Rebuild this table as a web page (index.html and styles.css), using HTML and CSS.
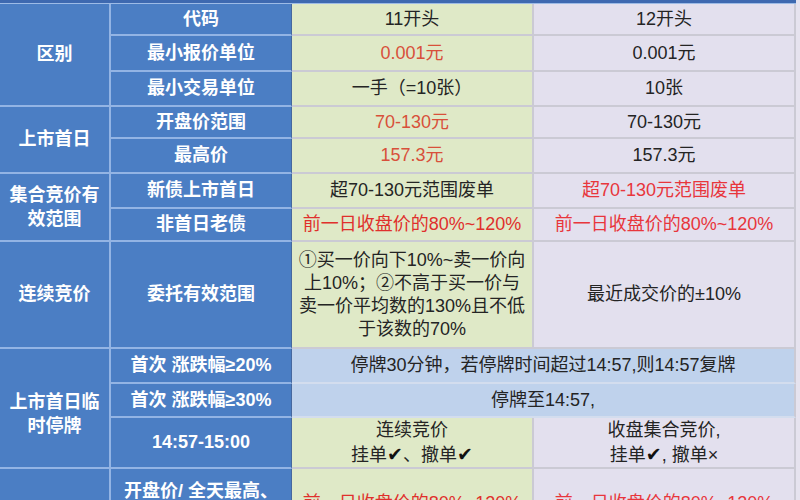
FILE: index.html
```html
<!DOCTYPE html>
<html lang="zh-CN">
<head>
<meta charset="utf-8">
<title>11开头与12开头可转债交易规则对比</title>
<link rel="stylesheet" href="styles.css">
</head>
<body>
<div class="sheet">
  <div class="head"></div>

  <div class="c b k r-1-4">区别</div>
  <div class="c b s">代码</div>
  <div class="c g">11开头</div>
  <div class="c v">12开头</div>

  <div class="c b s">最小报价单位</div>
  <div class="c g red3">0.001元</div>
  <div class="c v">0.001元</div>

  <div class="c b s">最小交易单位</div>
  <div class="c g">一手（=10张）</div>
  <div class="c v">10张</div>

  <div class="c b k r-2">上市首日</div>
  <div class="c b s">开盘价范围</div>
  <div class="c g red3">70-130元</div>
  <div class="c v">70-130元</div>

  <div class="c b s">最高价</div>
  <div class="c g red3">157.3元</div>
  <div class="c v">157.3元</div>

  <div class="c b k r-2 two"><span class="t">集合竞价有<br>效范围</span></div>
  <div class="c b s">新债上市首日</div>
  <div class="c g">超70-130元范围废单</div>
  <div class="c v red4">超70-130元范围废单</div>

  <div class="c b s">非首日老债</div>
  <div class="c g red">前一日收盘价的80%~120%</div>
  <div class="c v red4">前一日收盘价的80%~120%</div>

  <div class="c b k">连续竞价</div>
  <div class="c b s">委托有效范围</div>
  <div class="c g multi"><span class="t">①买一价向下10%~卖一价向上10%；②不高于买一价与卖一价平均数的130%且不低于该数的70%</span></div>
  <div class="c v">最近成交价的±10%</div>

  <div class="c b k r-3 two low"><span class="t">上市首日临<br>时停牌</span></div>
  <div class="c b s">首次 涨跌幅≥20%</div>
  <div class="c w span2">停牌30分钟，若停牌时间超过14:57,则14:57复牌</div>

  <div class="c b s">首次 涨跌幅≥30%</div>
  <div class="c w span2">停牌至14:57,</div>

  <div class="c b s">14:57-15:00</div>
  <div class="c g two"><span class="t">连续竞价<br>挂单<span class="mk">✔</span>、撤单<span class="mk">✔</span></span></div>
  <div class="c v two"><span class="t">收盘集合竞价,<br>挂单<span class="mk">✔</span>, 撤单×</span></div>

  <div class="c b k"></div>
  <div class="c b s two"><span class="t">开盘价/ 全天最高、<br>最低价</span></div>
  <div class="c g red">前一日收盘价的80%~120%</div>
  <div class="c v red4">前一日收盘价的80%~120%</div>
</div>
</body>
</html>
```

FILE: styles.css
```css
html, body {
  margin: 0;
  padding: 0;
  width: 800px;
  height: 500px;
  overflow: hidden;
  background: #e6e3ef;
}

.sheet {
  display: grid;
  width: 796px;
  grid-template-columns: 111px 181px 242px 262px;
  grid-template-rows: 4px 32px 36px 35px 32px 35px 35px 33px 107px 35px 34px 51px 70px;
  font-family: "Liberation Sans", "Noto Sans CJK SC", sans-serif;
  font-size: 18px;
  color: #242424;
}

.head {
  grid-column: 1 / 5;
  background: #3e69b0;
  border-bottom: 1px solid #9dbbe6;
}

.c {
  display: flex;
  align-items: center;
  justify-content: center;
  text-align: center;
  box-sizing: border-box;
  border-bottom: 2px solid #cbcad4;
  border-right: 2px solid #cbcad4;
  line-height: 23px;
}

.t {
  display: block;
}

.b {
  background: #4b7ec4;
  color: #fff;
  font-weight: bold;
  border-bottom-color: #93b4e4;
  border-right-color: #93b4e4;
}

.k { grid-column: 1; }
.s {
  grid-column: 2;
  border-right: 1px solid #46689f;
}

.r-1-4 { grid-row: span 3; }
.r-2 { grid-row: span 2; }
.r-3 { grid-row: span 3; }

.low { padding-top: 12px; }

.g { background: #dfe9c7; }
.v { background: #e3e0ee; }
.w {
  background: #bfd2ec;
  grid-column: 3 / 5;
  border-bottom-color: #d3ddee;
}

.two { line-height: 24px; }

.multi {
  padding: 0 4px;
  line-height: 23px;
}

.red3 { color: #d8503a; }
.red { color: #e0302c; }
.red4 { color: #e8363c; }

.mk {
  font-family: "DejaVu Sans", sans-serif;
  font-size: 19px;
  font-weight: bold;
  color: #111;
}
```
